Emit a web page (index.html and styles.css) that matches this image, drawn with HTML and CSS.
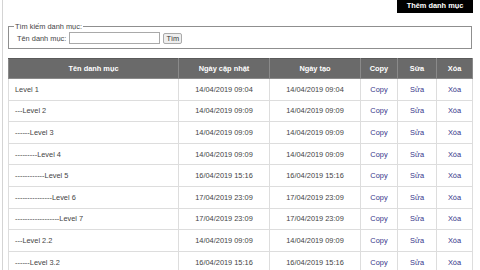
FILE: index.html
```html
<!DOCTYPE html>
<html lang="vi">

<head>
    <meta charset="UTF-8">
    <meta name="viewport" content="width=device-width, initial-scale=1.0">
    <title>Danh mục</title>
    <link rel="stylesheet" href="styles.css">
</head>

<body>
    <div class="page">
        <div class="topbar">
            <a class="add-button" href="#">Thêm danh mục</a>
        </div>

        <fieldset class="search">
            <legend>Tìm kiếm danh mục:</legend>
            <div class="search-row">
                <label for="ten">Tên danh mục:</label>
                <input type="text" id="ten" class="search-input">
                <button class="search-button">Tìm</button>
            </div>
        </fieldset>

        <table class="grid">
            <colgroup>
                <col style="width: 170px">
                <col style="width: 91px">
                <col style="width: 91px">
                <col style="width: 37px">
                <col style="width: 39px">
                <col style="width: 36px">
            </colgroup>
            <thead>
                <tr>
                    <th>Tên danh mục</th>
                    <th>Ngày cập nhật</th>
                    <th>Ngày tạo</th>
                    <th>Copy</th>
                    <th>Sửa</th>
                    <th>Xóa</th>
                </tr>
            </thead>
            <tbody>
                <tr>
                    <td class="name">Level 1</td>
                    <td>14/04/2019 09:04</td>
                    <td>14/04/2019 09:04</td>
                    <td><a href="#">Copy</a></td>
                    <td><a href="#">Sửa</a></td>
                    <td><a href="#">Xóa</a></td>
                </tr>
                <tr>
                    <td class="name">---Level 2</td>
                    <td>14/04/2019 09:09</td>
                    <td>14/04/2019 09:09</td>
                    <td><a href="#">Copy</a></td>
                    <td><a href="#">Sửa</a></td>
                    <td><a href="#">Xóa</a></td>
                </tr>
                <tr>
                    <td class="name">------Level 3</td>
                    <td>14/04/2019 09:09</td>
                    <td>14/04/2019 09:09</td>
                    <td><a href="#">Copy</a></td>
                    <td><a href="#">Sửa</a></td>
                    <td><a href="#">Xóa</a></td>
                </tr>
                <tr>
                    <td class="name">---------Level 4</td>
                    <td>14/04/2019 09:09</td>
                    <td>14/04/2019 09:09</td>
                    <td><a href="#">Copy</a></td>
                    <td><a href="#">Sửa</a></td>
                    <td><a href="#">Xóa</a></td>
                </tr>
                <tr>
                    <td class="name">------------Level 5</td>
                    <td>16/04/2019 15:16</td>
                    <td>16/04/2019 15:16</td>
                    <td><a href="#">Copy</a></td>
                    <td><a href="#">Sửa</a></td>
                    <td><a href="#">Xóa</a></td>
                </tr>
                <tr>
                    <td class="name">---------------Level 6</td>
                    <td>17/04/2019 23:09</td>
                    <td>17/04/2019 23:09</td>
                    <td><a href="#">Copy</a></td>
                    <td><a href="#">Sửa</a></td>
                    <td><a href="#">Xóa</a></td>
                </tr>
                <tr>
                    <td class="name">------------------Level 7</td>
                    <td>17/04/2019 23:09</td>
                    <td>17/04/2019 23:09</td>
                    <td><a href="#">Copy</a></td>
                    <td><a href="#">Sửa</a></td>
                    <td><a href="#">Xóa</a></td>
                </tr>
                <tr>
                    <td class="name">---Level 2.2</td>
                    <td>14/04/2019 09:09</td>
                    <td>14/04/2019 09:09</td>
                    <td><a href="#">Copy</a></td>
                    <td><a href="#">Sửa</a></td>
                    <td><a href="#">Xóa</a></td>
                </tr>
                <tr>
                    <td class="name">------Level 3.2</td>
                    <td>16/04/2019 15:16</td>
                    <td>16/04/2019 15:16</td>
                    <td><a href="#">Copy</a></td>
                    <td><a href="#">Sửa</a></td>
                    <td><a href="#">Xóa</a></td>
                </tr>
            </tbody>
        </table>
    </div>
</body>

</html>
```

FILE: styles.css
```css
body {
    font-family: 'Liberation Sans', Arial, sans-serif;
    font-size: 7.4px;
    color: #444444;
    background: #ffffff;
    margin: 0;
}

.page {
    margin-left: 2px;
    border-left: 1px solid #d4d4d4;
    padding: 0 8px 0 5px;
    height: 270px;
    overflow: hidden;
}

.topbar {
    display: flex;
    justify-content: flex-end;
    height: 13px;
    margin-right: -1px;
}

.add-button {
    background: #000000;
    color: #ffffff;
    font-weight: bold;
    text-decoration: none;
    width: 76px;
    height: 13px;
    line-height: 12px;
    text-align: center;
}

.search {
    margin: 9px 0 0 0;
    padding: 0 5px 3px 5px;
    border: 1px solid #8f8f8f;
    min-width: 0;
}

.search legend {
    padding: 0 1px;
    line-height: 9px;
}

.search-row {
    display: flex;
    align-items: center;
    height: 14px;
    margin: 0 0 0 3px;
}

.search-row label {
    margin-right: 3px;
}

.search-input {
    width: 91px;
    height: 12px;
    box-sizing: border-box;
    border: 1px solid #a9a9a9;
    padding: 0;
    margin: 0;
}

.search-button {
    font-family: inherit;
    font-size: 7.4px;
    height: 11px;
    width: 19px;
    box-sizing: border-box;
    padding: 0;
    margin-left: 3px;
    background: #eeeeee;
    border: 1px solid #aaaaaa;
    border-radius: 2px;
    color: #333333;
    line-height: 9px;
}

.grid {
    margin-top: 9px;
    width: 464px;
    table-layout: fixed;
    border-collapse: collapse;
}

.grid th {
    background: #6a6a6a;
    color: #ffffff;
    font-weight: bold;
    height: 19px;
    padding: 0;
    border: 1px solid #8a8a8a;
    border-top-color: #5a5a5a;
    text-align: center;
}

.grid td {
    height: 20.6px;
    padding: 0;
    border: 1px solid #dddddd;
    text-align: center;
    white-space: nowrap;
}

.grid td.name {
    text-align: left;
    padding-left: 6px;
}

.grid a {
    color: #35358a;
    text-decoration: none;
}
```
